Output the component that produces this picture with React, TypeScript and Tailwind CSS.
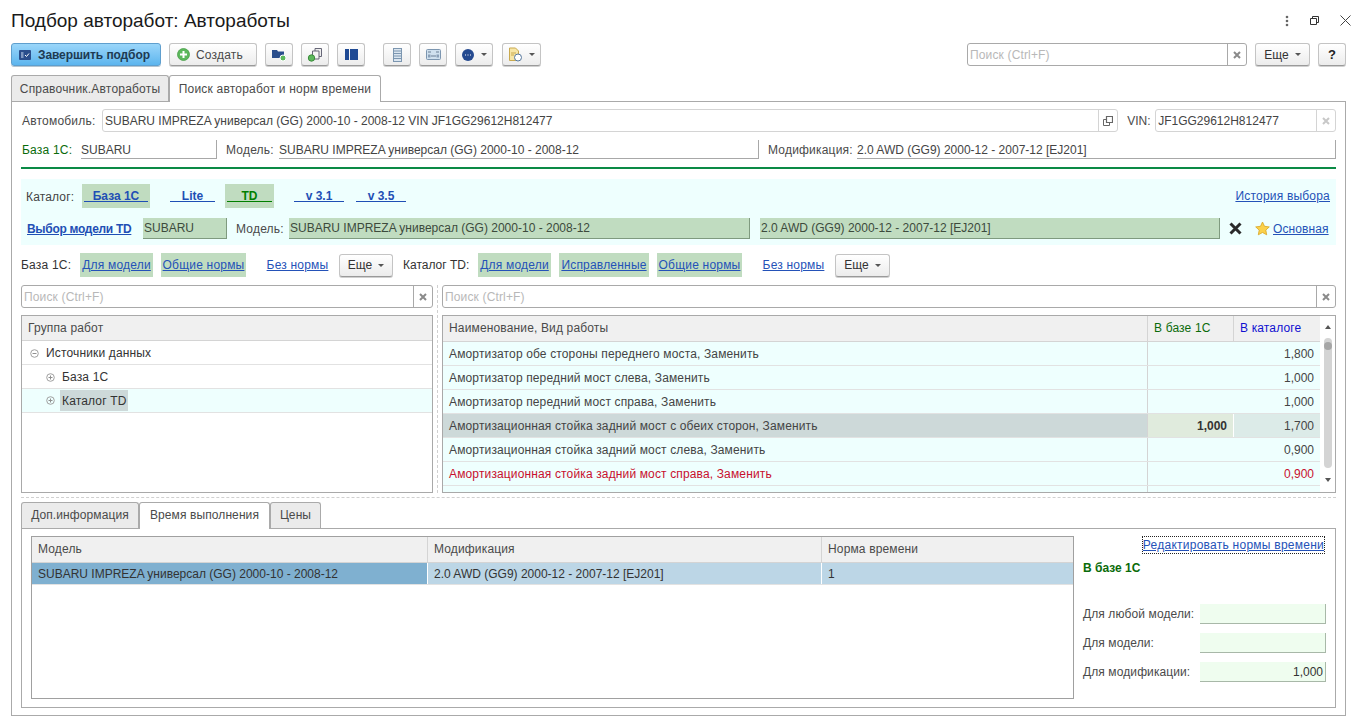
import React from "react";

const font = { fontFamily: '"Liberation Sans", Arial, sans-serif' };

function ToolButton({ children, className = "" }: { children: React.ReactNode; className?: string }) {
  return (
    <div className={`h-[23px] flex items-center justify-center gap-[6px] rounded-[3px] border border-[#c4c4c4] border-b-[#9a9a9a] bg-linear-to-b from-white to-[#ececec] shadow-[0_1px_0_#d0d0d0] text-[#4a4a4a] ${className}`}>
      {children}
    </div>
  );
}

function Caret() {
  return <span className="w-0 h-0 border-x-[3px] border-x-transparent border-t-[3px] border-t-[#555]" />;
}

function ClearX({ light }: { light?: boolean }) {
  return (
    <svg width="8" height="8" viewBox="0 0 8 8">
      <path d="M1 1l6 6M7 1L1 7" stroke={light ? "#c8c8c8" : "#8a8a8a"} strokeWidth="2" />
    </svg>
  );
}

function SearchBox({ className = "" }: { className?: string }) {
  return (
    <div className={`h-[23px] flex rounded-[3px] border border-[#a9a9a9] bg-white ${className}`}>
      <div className="flex-1 pl-[2px] leading-[23px] text-[#b8b8b8] tracking-[0.15px]">Поиск (Ctrl+F)</div>
      <div className="w-[19px] border-l border-[#a9a9a9] flex items-center justify-center">
        <ClearX />
      </div>
    </div>
  );
}

function ReadField({ children, className = "" }: { children: React.ReactNode; className?: string }) {
  return (
    <div className={`h-[19px] leading-[20px] border-b border-r border-[#a8a8a8] text-[#444] whitespace-nowrap ${className}`}>
      {children}
    </div>
  );
}

function GreenField({ children, className = "" }: { children: React.ReactNode; className?: string }) {
  return (
    <div className={`h-[21px] leading-[21px] pl-[1px] bg-[#c0dcc0] border-b border-r border-[#7f9a7f] text-[#3c4a3c] whitespace-nowrap ${className}`}>
      {children}
    </div>
  );
}

function CatalogLink({ label, on, green, className = "" }: { label: string; on?: boolean; green?: boolean; className?: string }) {
  return (
    <div className={`h-[24px] flex justify-center pt-[5px] ${on ? "bg-[#c0dcc0]" : ""} ${className}`}>
      <span className={`h-[13px] leading-[15px] border-b font-bold text-center w-full mx-[2px] ${green ? "text-[#007f00] border-[#007f00]" : "text-[#1f4fb5] border-[#1f4fb5]"}`}>
        {label}
      </span>
    </div>
  );
}

function FilterLink({ label, on, className = "" }: { label: string; on?: boolean; className?: string }) {
  return (
    <div className={`h-[24px] flex items-center justify-center underline text-[#2452b8] tracking-[0.2px] ${on ? "bg-[#c0dcc0]" : ""} ${className}`}>
      {label}
    </div>
  );
}

const rows = [
  { name: "Амортизатор обе стороны переднего моста, Заменить", base: "", cat: "1,800" },
  { name: "Амортизатор передний мост слева, Заменить", base: "", cat: "1,000" },
  { name: "Амортизатор передний мост справа, Заменить", base: "", cat: "1,000" },
  { name: "Амортизационная стойка задний мост с обеих сторон, Заменить", base: "1,000", cat: "1,700", selected: true },
  { name: "Амортизационная стойка задний мост слева, Заменить", base: "", cat: "0,900" },
  { name: "Амортизационная стойка задний мост справа, Заменить", base: "", cat: "0,900", red: true },
];

function TreeSign({ minus }: { minus?: boolean }) {
  return (
    <svg width="9" height="9" viewBox="0 0 9 9" className="shrink-0">
      <circle cx="4.5" cy="4.5" r="3.8" fill="none" stroke="#a0a0a0" />
      <path d={minus ? "M2.5 4.5h4" : "M2.5 4.5h4M4.5 2.5v4"} stroke="#909090" />
    </svg>
  );
}

export default function App() {
  return (
    <div style={font} className="w-[1366px] h-[728px] overflow-hidden bg-white text-[12px] text-[#4a4a4a] pl-[11px] pr-[20px]">
      {/* header */}
      <div className="h-[43px] pb-[2px] flex items-center justify-between">
        <h1 className="text-[19px] text-[#1a1a1a] leading-[21px]">Подбор авторабот: Автоработы</h1>
        <div className="flex items-center gap-[21px] -mr-[5px]">
          <svg width="4" height="12" viewBox="0 0 4 12">
            <circle cx="2" cy="2" r="1.3" fill="#666" />
            <circle cx="2" cy="6" r="1.3" fill="#666" />
            <circle cx="2" cy="10" r="1.3" fill="#666" />
          </svg>
          <svg width="9" height="9" viewBox="0 0 9 9">
            <path d="M.5 2.5h6v6h-6zM2.5 2.5v-2h6v6h-2" fill="none" stroke="#333" />
          </svg>
          <svg width="11" height="11" viewBox="0 0 11 11">
            <path d="M.5.5l10 10M10.5.5l-10 10" stroke="#444" />
          </svg>
        </div>
      </div>

      {/* toolbar */}
      <div className="h-[23px] flex items-center">
        <div className="w-[150px] h-[23px] flex items-center gap-[7px] pl-[7px] rounded-[3px] border border-[#5f9fce] bg-linear-to-b from-[#9ad6fa] to-[#5cb5ee] shadow-[0_1px_0_#b5c5d0] text-[#1e3a52] font-bold">
          <svg width="12" height="10" viewBox="0 0 12 10">
            <rect width="12" height="10" rx="1" fill="#2a4e8c" />
            <path d="M2 3h2.5M2 5h2.5M2 7h2.5" stroke="#cfe0f5" />
            <path d="M6 5l1.5 1.5L10 3.5" stroke="#fff" fill="none" />
          </svg>
          <span className="tracking-[-0.1px]">Завершить подбор</span>
        </div>
        <ToolButton className="w-[88px] ml-[8px] justify-start pl-[7px]">
          <svg width="13" height="13" viewBox="0 0 13 13">
            <circle cx="6.5" cy="6.5" r="6" fill="#5cb85c" stroke="#4a9e4a" strokeWidth=".8" />
            <path d="M6.5 3v7M3 6.5h7" stroke="#fff" strokeWidth="2" />
          </svg>
          <span className="tracking-[0.2px]">Создать</span>
        </ToolButton>
        <ToolButton className="w-[28px] ml-[8px]">
          <svg width="15" height="14" viewBox="0 0 15 14">
            <path d="M0 2h5l1 1.5h6V10H0z" fill="#2a4e8c" />
            <circle cx="11" cy="10" r="3" fill="#5cb85c" stroke="#fff" />
          </svg>
        </ToolButton>
        <ToolButton className="w-[28px] ml-[8px]">
          <svg width="16" height="15" viewBox="0 0 16 15">
            <path d="M8 1.5h6.5v8H8z" fill="#eee" stroke="#667" />
            <path d="M5.5 4H12v8H5.5z" fill="#f4f4f4" stroke="#667" />
            <circle cx="4.5" cy="11" r="3.2" fill="#5cb85c" stroke="#3c8c3c" />
          </svg>
        </ToolButton>
        <ToolButton className="w-[28px] ml-[8px]">
          <svg width="13" height="11" viewBox="0 0 13 11">
            <rect width="4" height="11" fill="#1f4a94" />
            <rect x="5" width="8" height="11" fill="#1f4a94" />
          </svg>
        </ToolButton>
        <ToolButton className="w-[28px] ml-[18px]">
          <svg width="9" height="14" viewBox="0 0 9 14">
            <rect x=".5" y=".5" width="8" height="13" fill="#dbe6f0" stroke="#7c96b0" />
            <path d="M1 3h7M1 5.5h7M1 8h7M1 10.5h7" stroke="#7c96b0" />
          </svg>
        </ToolButton>
        <ToolButton className="w-[28px] ml-[8px]">
          <svg width="15" height="11" viewBox="0 0 15 11">
            <rect x=".5" y=".5" width="14" height="10" rx="1" fill="#cfe0ee" stroke="#7c96b0" />
            <path d="M2 3h3M10 3h3M5 7h5" stroke="#6a7f95" />
            <rect x="2" y="5.5" width="2.5" height="3" fill="#8aa0b8" />
            <rect x="10.5" y="5.5" width="2.5" height="3" fill="#8aa0b8" />
          </svg>
        </ToolButton>
        <ToolButton className="w-[38px] ml-[8px] gap-[7px]">
          <svg width="12" height="12" viewBox="0 0 12 12">
            <circle cx="6" cy="6" r="6" fill="#24498f" />
            <path d="M3 6h1M5.5 6h1M8 6h1" stroke="#fff" />
          </svg>
          <Caret />
        </ToolButton>
        <ToolButton className="w-[39px] ml-[9px] gap-[5px]">
          <svg width="15" height="15" viewBox="0 0 15 15">
            <path d="M1.5 1h6l3 3v9.5h-9z" fill="#f7e6a6" stroke="#c9a94e" />
            <path d="M3 6h5M3 8h3" stroke="#c9a94e" />
            <circle cx="10" cy="10.5" r="3.5" fill="#fff" stroke="#55779c" />
          </svg>
          <Caret />
        </ToolButton>
        <SearchBox className="w-[280px] ml-auto" />
        <ToolButton className="w-[55px] ml-[8px] text-[#333]">
          <span>Еще</span>
          <Caret />
        </ToolButton>
        <ToolButton className="w-[28px] ml-[8px] font-bold text-[#222] text-[13px]">?</ToolButton>
      </div>

      {/* top tabs */}
      <div className="h-[26px] mt-[9px] flex items-end tracking-[0.2px]">
        <div className="w-[158px] h-[26px] flex items-center justify-center bg-[#ebebeb] border border-b-0 border-[#aaa] rounded-t-[3px]">
          Справочник.Автоработы
        </div>
        <div className="w-[212px] h-[27px] -mb-[1px] relative z-10 flex items-center justify-center bg-white border border-b-0 border-[#aaa] rounded-t-[3px]">
          Поиск авторабот и норм времени
        </div>
      </div>

      {/* main panel */}
      <div className="h-[615px] border border-[#aaa] px-[9px] flex flex-col">
        <div className="h-[23px] mt-[7px] flex items-center">
          <span className="w-[81px] pl-[1px] shrink-0 tracking-[0.2px]">Автомобиль:</span>
          <div className="w-[1017px] h-[23px] flex rounded-[3px] border border-[#d4d4d4]">
            <div className="flex-1 pl-[2px] leading-[23px] text-[#444]">SUBARU IMPREZA универсал (GG) 2000-10 - 2008-12 VIN JF1GG29612H812477</div>
            <div className="w-[19px] border-l border-[#d4d4d4] flex items-center justify-center">
              <svg width="10" height="10" viewBox="0 0 10 10">
                <path d="M3.5.5h6v6h-6z" fill="none" stroke="#666" strokeWidth="1.2" />
                <path d="M.5 3.5h3M.5 3.5v6h6v-3" fill="none" stroke="#666" />
              </svg>
            </div>
          </div>
          <span className="ml-[9px] w-[28px]">VIN:</span>
          <div className="w-[181px] h-[23px] flex rounded-[3px] border border-[#d4d4d4]">
            <div className="flex-1 pl-[2px] leading-[23px] text-[#444]">JF1GG29612H812477</div>
            <div className="w-[19px] border-l border-[#d4d4d4] flex items-center justify-center">
              <ClearX light />
            </div>
          </div>
        </div>

        <div className="h-[19px] mt-[8px] flex items-center">
          <span className="w-[60px] pl-[1px] text-[#0a6b0a] shrink-0 tracking-[0.2px]">База 1С:</span>
          <ReadField className="w-[136px]">SUBARU</ReadField>
          <span className="ml-[9px] w-[52px] shrink-0 tracking-[0.2px]">Модель:</span>
          <ReadField className="w-[480px] ml-[1px]">SUBARU IMPREZA универсал (GG) 2000-10 - 2008-12</ReadField>
          <span className="ml-[9px] w-[89px] shrink-0 tracking-[0.2px]">Модификация:</span>
          <ReadField className="w-[479px]">2.0 AWD (GG9) 2000-12 - 2007-12 [EJ201]</ReadField>
        </div>

        <div className="h-[2px] mt-[8px] bg-[#0a8a45] shrink-0" />

        {/* catalog block */}
        <div className="h-[66px] mt-[10px] bg-[#eefffe] shrink-0 pt-[5px]">
          <div className="h-[24px] flex items-center">
            <span className="w-[61px] pl-[5px] pt-[2px] text-[#444] tracking-[0.15px]">Каталог:</span>
            <CatalogLink label="База 1С" on className="w-[68px]" />
            <CatalogLink label="Lite" className="w-[49px] ml-[18px]" />
            <CatalogLink label="TD" on green className="w-[49px] ml-[8px]" />
            <CatalogLink label="v 3.1" className="w-[54px] ml-[18px]" />
            <CatalogLink label="v 3.5" className="w-[54px] ml-[8px]" />
            <span className="ml-auto mr-[6px] underline text-[#2452b8] tracking-[0.2px]">История выбора</span>
          </div>
          <div className="h-[21px] mt-[10px] flex items-center">
            <span className="w-[122px] pl-[6px] font-bold underline text-[#1f4fb5] shrink-0 tracking-[-0.3px]">Выбор модели TD</span>
            <GreenField className="w-[84px]">SUBARU</GreenField>
            <span className="ml-[9px] w-[53px] shrink-0 tracking-[0.2px]">Модель:</span>
            <GreenField className="w-[461px]">SUBARU IMPREZA универсал (GG) 2000-10 - 2008-12</GreenField>
            <GreenField className="w-[460px] ml-[10px]">2.0 AWD (GG9) 2000-12 - 2007-12 [EJ201]</GreenField>
            <svg width="13" height="13" viewBox="0 0 13 13" className="ml-[9px] shrink-0">
              <path d="M1.5 1.5l10 10M11.5 1.5l-10 10" stroke="#2a2a2a" strokeWidth="3" />
            </svg>
            <svg width="15" height="15" viewBox="0 0 15 15" className="ml-[13px] shrink-0">
              <path d="M7.5 1l2 4.3 4.8.6-3.5 3.2.9 4.7-4.2-2.3-4.2 2.3.9-4.7L.7 5.9l4.8-.6z" fill="#fbd14b" stroke="#d9a520" strokeWidth=".8" />
            </svg>
            <span className="ml-[3px] underline text-[#2452b8] tracking-[0.1px]">Основная</span>
          </div>
        </div>

        {/* filters */}
        <div className="h-[24px] mt-[8px] flex items-center shrink-0">
          <span className="w-[59px] text-[#333] shrink-0 tracking-[0.2px]">База 1С:</span>
          <FilterLink label="Для модели" on className="w-[73px]" />
          <FilterLink label="Общие нормы" on className="w-[85px] ml-[8px]" />
          <FilterLink label="Без нормы" className="w-[63px] ml-[20px]" />
          <ToolButton className="w-[54px] ml-[10px] text-[#333]">
            <span>Еще</span>
            <Caret />
          </ToolButton>
          <span className="w-[75px] ml-[10px] text-[#333] shrink-0">Каталог TD:</span>
          <FilterLink label="Для модели" on className="w-[73px]" />
          <FilterLink label="Исправленные" on className="w-[90px] ml-[8px]" />
          <FilterLink label="Общие нормы" on className="w-[85px] ml-[8px]" />
          <FilterLink label="Без нормы" className="w-[63px] ml-[20px]" />
          <ToolButton className="w-[55px] ml-[10px] text-[#333]">
            <span>Еще</span>
            <Caret />
          </ToolButton>
        </div>

        {/* search + tables */}
        <div className="flex shrink-0 mt-[8px]">
          <div className="w-[412px] shrink-0 flex flex-col">
            <SearchBox />
            <div className="h-[178px] mt-[7px] border border-[#a9a9a9] tracking-[0.15px]">
              <div className="h-[25px] leading-[24px] pl-[6px] bg-[#f0f0f0] border-b border-[#d4d4d4]">Группа работ</div>
              <div className="h-[24px] flex items-center pt-[1px] pl-[8px] gap-[7px] border-b border-[#e2e2e2] text-[#333]">
                <TreeSign minus />
                <span>Источники данных</span>
              </div>
              <div className="h-[24px] flex items-center pt-[1px] pl-[24px] gap-[7px] border-b border-[#e2e2e2] text-[#333]">
                <TreeSign />
                <span>База 1С</span>
              </div>
              <div className="h-[24px] flex items-center pl-[24px] gap-[5px] bg-[#eefffe] border-b border-[#e2e2e2] text-[#333]">
                <TreeSign />
                <span className="bg-[#cdd9d9] h-[21px] leading-[23px] px-[2px]">Каталог TD</span>
              </div>
            </div>
          </div>
          <div className="w-[9px] shrink-0 flex justify-center">
            <div className="h-full border-l border-dashed border-[#d0d0d0]" />
          </div>
          <div className="w-[894px] shrink-0 flex flex-col">
            <SearchBox />
            <div className="h-[178px] mt-[7px] border border-[#a9a9a9] flex overflow-hidden">
              <div className="w-[877px] shrink-0">
                <div className="h-[26px] leading-[25px] flex bg-[#f0f0f0] border-b border-[#d4d4d4] tracking-[0.15px]">
                  <div className="w-[705px] pl-[6px] border-r border-[#d4d4d4]">Наименование, Вид работы</div>
                  <div className="w-[86px] pl-[6px] text-[#0a6b0a] border-r border-[#d4d4d4]">В базе 1С</div>
                  <div className="w-[86px] pl-[6px] text-[#1010d0]">В каталоге</div>
                </div>
                {rows.map((row) => (
                  <div key={row.name} className="h-[24px] leading-[25px] flex bg-[#eefffe] border-b border-[#e2e2e2]">
                    <div className={`w-[705px] pl-[6px] border-r border-[#d4d4d4] tracking-[0.14px] ${row.selected ? "bg-[#cdd9d9]" : ""} ${row.red ? "text-[#c8102e]" : "text-[#444]"}`}>
                      {row.name}
                    </div>
                    <div className={`w-[86px] pr-[6px] text-right font-bold text-[#333] border-r border-white ${row.selected ? "bg-[#e0ebdd]" : "border-r-transparent"}`}>
                      {row.base}
                    </div>
                    <div className={`w-[86px] pr-[6px] text-right ${row.selected ? "bg-[#dcebe8]" : ""} ${row.red ? "text-[#c8102e]" : "text-[#444]"}`}>
                      {row.cat}
                    </div>
                  </div>
                ))}
                <div className="h-[6px] flex bg-[#eefffe]">
                  <div className="w-[705px] border-r border-[#d4d4d4]" />
                </div>
              </div>
              <div className="flex-1 flex flex-col items-center pt-[9px]">
                <span className="w-0 h-0 border-x-[3px] border-x-transparent border-b-[4px] border-b-[#555]" />
                <div className="w-[8px] h-[130px] mt-[9px] pt-[4px] rounded-[4px] bg-[#d4d4d4]">
                  <div className="w-[8px] h-[8px] rounded-full bg-[#a6a6a6]" />
                </div>
                <span className="w-0 h-0 mt-[10px] border-x-[3px] border-x-transparent border-t-[4px] border-t-[#555]" />
              </div>
            </div>
          </div>
        </div>

        <div className="h-0 mt-[4px] border-t border-dashed border-[#d0d0d0] shrink-0" />

        {/* bottom tabs */}
        <div className="h-[26px] mt-[4px] flex shrink-0 tracking-[0.1px]">
          <div className="w-[118px] pb-[1px] flex items-center justify-center bg-[#ebebeb] border border-b-0 border-[#aaa] rounded-t-[3px]">Доп.информация</div>
          <div className="w-[131px] h-[27px] pb-[2px] relative z-10 flex items-center justify-center bg-white border border-b-0 border-[#aaa] rounded-t-[3px]">Время выполнения</div>
          <div className="w-[51px] pb-[1px] flex items-center justify-center bg-[#ebebeb] border border-b-0 border-[#aaa] rounded-t-[3px]">Цены</div>
        </div>

        <div className="h-[180px] border border-[#aaa] pt-[7px] px-[9px] flex shrink-0">
          <div className="w-[1043px] h-[163px] border border-[#a0a0a0] shrink-0">
            <div className="h-[26px] leading-[25px] flex bg-[#f0f0f0] border-b border-[#d4d4d4] tracking-[0.15px]">
              <div className="w-[396px] pl-[6px] border-r border-[#d4d4d4]">Модель</div>
              <div className="w-[394px] pl-[6px] border-r border-[#d4d4d4]">Модификация</div>
              <div className="flex-1 pl-[6px]">Норма времени</div>
            </div>
            <div className="h-[22px] leading-[22px] flex border-b border-[#e2e2e2] text-[#333]">
              <div className="w-[396px] pl-[6px] bg-[#7fb0d0] border-r border-white">SUBARU IMPREZA универсал (GG) 2000-10 - 2008-12</div>
              <div className="w-[394px] pl-[6px] bg-[#bcd6e6] border-r border-white">2.0 AWD (GG9) 2000-12 - 2007-12 [EJ201]</div>
              <div className="flex-1 pl-[6px] bg-[#bcd6e6]">1</div>
            </div>
          </div>
          <div className="flex-1 pl-[9px] flex flex-col">
            <div className="flex justify-end">
              <span className="mt-[1px] mr-[2px] h-[16px] leading-[16px] outline-1 outline-dotted outline-[#222] text-[#2452b8] underline tracking-[0.25px]">Редактировать нормы времени</span>
            </div>
            <div className="mt-[6px] font-bold text-[#0a6b0a]">В базе 1С</div>
            <div className="mt-[27px] flex flex-col gap-[9px]">
              {[
                ["Для любой модели:", ""],
                ["Для модели:", ""],
                ["Для модификации:", "1,000"],
              ].map(([label, value]) => (
                <div key={label} className="h-[20px] flex items-center">
                  <span className="w-[117px] shrink-0 tracking-[0.1px]">{label}</span>
                  <div className="w-[126px] h-[20px] leading-[20px] pr-[2px] text-right text-[#333] bg-[#effdef] border-b border-r border-[#a8b8a8]">{value}</div>
                </div>
              ))}
            </div>
          </div>
        </div>
      </div>
    </div>
  );
}
